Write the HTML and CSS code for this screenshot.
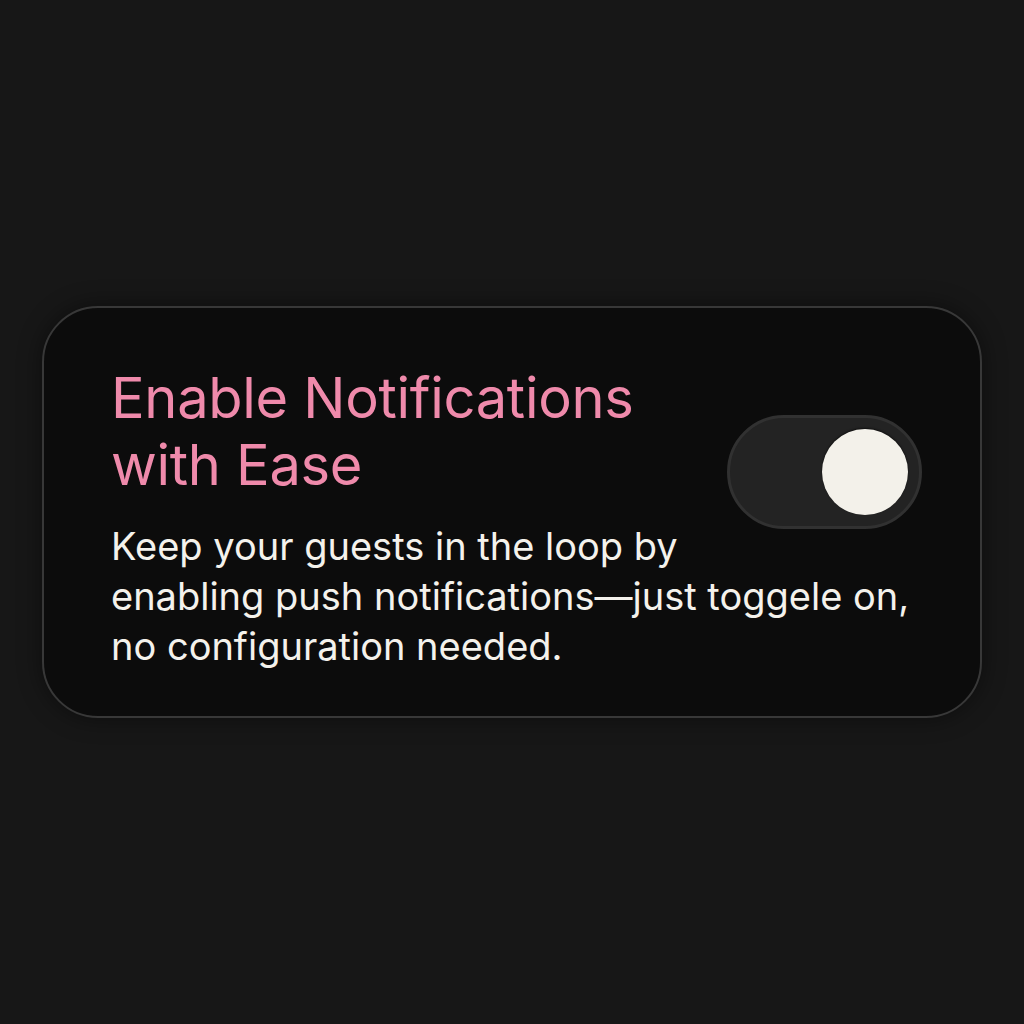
FILE: index.html
```html
<!DOCTYPE html>
<html lang="en">
<head>
<meta charset="utf-8">
<title>Enable Notifications</title>
<link rel="stylesheet" href="styles.css">
</head>
<body>
<main class="card">
  <div class="head">
    <h1 class="title">Enable Notifications<br>with Ease</h1>
    <div class="toggle" role="switch" aria-checked="true"><span class="knob"></span></div>
  </div>
  <p class="desc">Keep your guests in the loop by<br>enabling push notifications—just toggele on,<br>no configuration needed.</p>
</main>
</body>
</html>
```
FILE: styles.css
```css
html, body {
  margin: 0;
  padding: 0;
  background: #171717;
  width: 1024px;
  height: 1024px;
}
body {
  display: flex;
  align-items: flex-start;
  padding: 306px 0 0 42px;
  box-sizing: border-box;
  font-family: Inter, "Noto Sans", sans-serif;
}
.card {
  box-sizing: border-box;
  width: 940px;
  height: 412px;
  border: 2px solid #383838;
  border-radius: 56px;
  background: #0c0c0c;
  padding: 57px 58px 0 67px;
  box-shadow: 0 0 24px rgba(0,0,0,0.45);
}
.head {
  display: flex;
  justify-content: space-between;
  align-items: flex-start;
}
.title {
  margin: 0;
  font-weight: 400;
  font-size: 56px;
  line-height: 67px;
  color: #ef8aab;
  letter-spacing: -0.3px;
}
.toggle {
  box-sizing: border-box;
  width: 195px;
  height: 114px;
  margin-top: 50px;
  border-radius: 57px;
  background: #232323;
  border: 3px solid #313131;
  display: flex;
  align-items: center;
  justify-content: flex-end;
  padding-right: 11px;
  flex-shrink: 0;
}
.knob {
  width: 86px;
  height: 86px;
  border-radius: 50%;
  background: #f3f1ea;
  box-shadow: 0 -1px 2px rgba(0,0,0,0.6);
}
.desc {
  margin: -8px 0 0;
  font-size: 38px;
  line-height: 50px;
  color: #f4f2ec;
  font-weight: 400;
}
```
